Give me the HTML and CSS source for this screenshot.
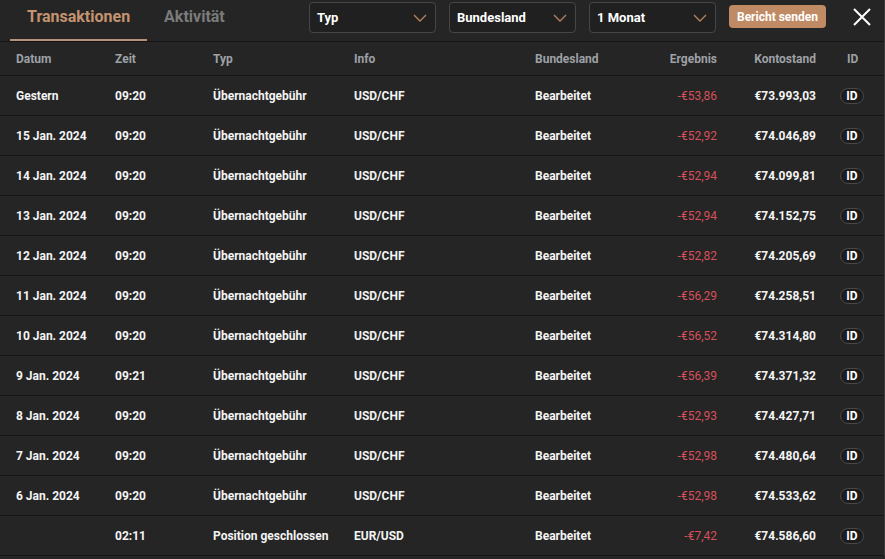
FILE: index.html
```html
<!DOCTYPE html>
<html lang="de">
<head>
    <meta charset="UTF-8">
    <title>Transaktionen</title>
    <link rel="stylesheet" href="styles.css">
</head>
<body>
<div class="panel">
    <div class="topbar">
        <div class="tabs">
            <div class="tab active">Transaktionen</div>
            <div class="tab">Aktivität</div>
        </div>
        <div class="filters">
            <div class="select">Typ
                <svg class="chev" width="14" height="8" viewBox="0 0 14 8"><path d="M1 1l6 6 6-6" fill="none" stroke="#b5815c" stroke-width="1.4"/></svg>
            </div>
            <div class="select">Bundesland
                <svg class="chev" width="14" height="8" viewBox="0 0 14 8"><path d="M1 1l6 6 6-6" fill="none" stroke="#b5815c" stroke-width="1.4"/></svg>
            </div>
            <div class="select">1 Monat
                <svg class="chev" width="14" height="8" viewBox="0 0 14 8"><path d="M1 1l6 6 6-6" fill="none" stroke="#b5815c" stroke-width="1.4"/></svg>
            </div>
            <button class="send">Bericht senden</button>
            <svg class="close" width="18" height="18" viewBox="0 0 18 18"><path d="M1 1l16 16M17 1L1 17" stroke="#fff" stroke-width="2"/></svg>
        </div>
    </div>

    <div class="row head">
        <div>Datum</div>
        <div>Zeit</div>
        <div>Typ</div>
        <div>Info</div>
        <div>Bundesland</div>
        <div class="num">Ergebnis</div>
        <div class="num">Kontostand</div>
        <div class="idh">ID</div>
    </div>
    <div id="rows"></div>
</div>

<script>
    var data = [
        ['Gestern', '09:20', 'Übernachtgebühr', 'USD/CHF', '-€53,86', '€73.993,03'],
        ['15 Jan. 2024', '09:20', 'Übernachtgebühr', 'USD/CHF', '-€52,92', '€74.046,89'],
        ['14 Jan. 2024', '09:20', 'Übernachtgebühr', 'USD/CHF', '-€52,94', '€74.099,81'],
        ['13 Jan. 2024', '09:20', 'Übernachtgebühr', 'USD/CHF', '-€52,94', '€74.152,75'],
        ['12 Jan. 2024', '09:20', 'Übernachtgebühr', 'USD/CHF', '-€52,82', '€74.205,69'],
        ['11 Jan. 2024', '09:20', 'Übernachtgebühr', 'USD/CHF', '-€56,29', '€74.258,51'],
        ['10 Jan. 2024', '09:20', 'Übernachtgebühr', 'USD/CHF', '-€56,52', '€74.314,80'],
        ['9 Jan. 2024', '09:21', 'Übernachtgebühr', 'USD/CHF', '-€56,39', '€74.371,32'],
        ['8 Jan. 2024', '09:20', 'Übernachtgebühr', 'USD/CHF', '-€52,93', '€74.427,71'],
        ['7 Jan. 2024', '09:20', 'Übernachtgebühr', 'USD/CHF', '-€52,98', '€74.480,64'],
        ['6 Jan. 2024', '09:20', 'Übernachtgebühr', 'USD/CHF', '-€52,98', '€74.533,62'],
        ['', '02:11', 'Position geschlossen', 'EUR/USD', '-€7,42', '€74.586,60']
    ];

    var html = '';
    data.forEach(function (r) {
        html += '<div class="row">' +
            '<div>' + r[0] + '</div>' +
            '<div>' + r[1] + '</div>' +
            '<div>' + r[2] + '</div>' +
            '<div>' + r[3] + '</div>' +
            '<div>Bearbeitet</div>' +
            '<div class="num neg">' + r[4] + '</div>' +
            '<div class="num">' + r[5] + '</div>' +
            '<div><span class="badge">ID</span></div>' +
            '</div>';
    });
    document.getElementById('rows').innerHTML = html;
</script>
</body>
</html>
```

FILE: styles.css
```css
body, html {
    margin: 0;
    height: 100%;
    overflow: hidden;
    background: #252525;
    font-family: Roboto, "Liberation Sans", Arial, sans-serif;
    font-weight: 700;
    font-size: 12px;
    color: #f2f2f2;
}
.panel {
    width: 885px;
    border-right: 1px solid #3a3a3a;
    box-sizing: border-box;
}
.topbar {
    display: flex;
    justify-content: space-between;
    height: 41px;
    border-bottom: 1px solid #141414;
    box-sizing: content-box;
}
.tabs {
    display: flex;
    padding-left: 10px;
}
.tab {
    font-size: 16px;
    color: #7b7b7b;
    padding: 7px 17px 0;
    height: 32px;
    border-bottom: 2px solid transparent;
}
.tab.active {
    color: #c4936f;
    border-bottom-color: #b89278;
}
.filters {
    display: flex;
    align-items: flex-start;
    padding-top: 2px;
}
.select {
    width: 111px;
    height: 29px;
    margin-right: 13px;
    padding: 0 7px;
    display: flex;
    align-items: center;
    justify-content: space-between;
    border: 1px solid #464646;
    border-radius: 4px;
    background: #202020;
    color: #fff;
    font-size: 13px;
}
.chev {
    margin-right: 1px;
}
.send {
    margin-top: 3px;
    width: 97px;
    height: 23px;
    border: 0;
    border-radius: 4px;
    background: #c08b64;
    color: #fff;
    font-family: inherit;
    font-weight: 700;
    font-size: 12px;
    padding: 0;
}
.close {
    margin: 6px 13px 0 27px;
}
.row {
    display: grid;
    grid-template-columns: 99px 98px 141px 181px 110px 72px 99px 1fr;
    align-items: center;
    height: 40px;
    padding-left: 16px;
    border-bottom: 1px solid #161616;
    box-sizing: border-box;
    color: #f4f4f4;
}
.row.head {
    height: 34px;
    color: #9da1a6;
}
.num {
    text-align: right;
}
.neg {
    color: #d6505a;
    font-weight: 400;
}
.idh {
    padding-left: 31px;
}
.badge {
    display: inline-block;
    margin-left: 24px;
    width: 22px;
    height: 14px;
    line-height: 14px;
    text-align: center;
    border: 1px solid #474747;
    border-radius: 8px;
    background: #1d1d1d;
    color: #fff;
}
```
